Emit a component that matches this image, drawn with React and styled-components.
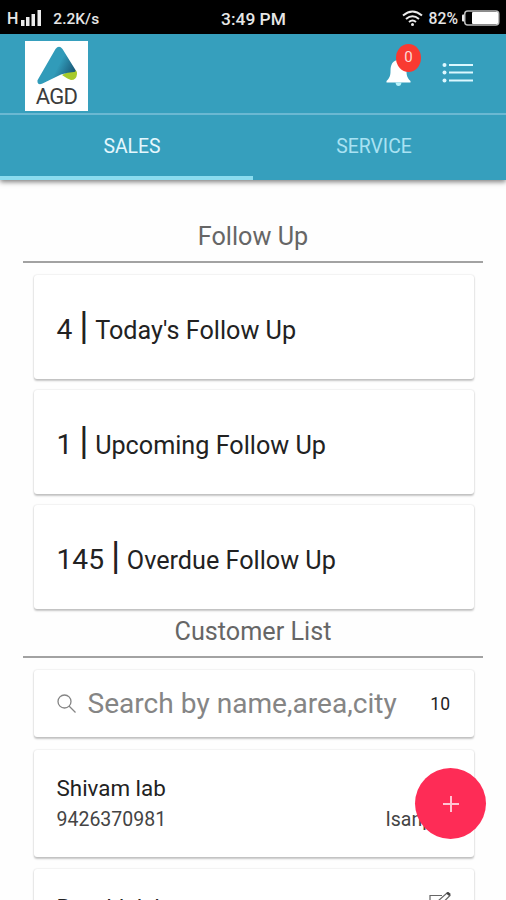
import styled, { createGlobalStyle } from "styled-components"

const GlobalStyle = createGlobalStyle`
    * {
        box-sizing: border-box;
    }

    body {
        margin: 0;
        background-color: #fefefe;
        font-family: Roboto, "Liberation Sans", sans-serif;
        color: #222;
    }
`

const Screen = styled.div`
    position: relative;
    width: 506px;
    height: 900px;
    overflow: hidden;
    display: flex;
    flex-direction: column;
`

const StatusBar = styled.div`
    flex: none;
    height: 34px;
    padding: 0 6px 0 7px;
    display: grid;
    grid-template-columns: 1fr auto 1fr;
    align-items: center;
    background-color: #000;
    color: #e6e6e6;
`

const StatusGroup = styled.div`
    display: flex;
    align-items: center;
    justify-content: ${({ $end }) => ($end ? "flex-end" : "flex-start")};
`

const StatusText = styled.span`
    font-size: ${({ $size }) => $size}px;
    font-weight: 500;
    line-height: 34px;
    padding-top: 2px;
    white-space: nowrap;
`

const Signal = styled.svg`
    margin: 0 11px 0 2px;
`

const Wifi = styled.svg`
    margin-right: 6px;
`

const Battery = styled.svg`
    margin-left: 4px;
`

const Header = styled.header`
    flex: none;
    height: 146px;
    background-color: #369fbd;
    box-shadow: 0 2px 5px rgba(0, 0, 0, 0.5);
`

const NavBar = styled.div`
    height: 81px;
    padding: 7px 33px 0 25px;
    display: flex;
    justify-content: space-between;
    border-bottom: 2px solid #6bb8d2;
`

const Logo = styled.div`
    width: 63px;
    height: 70px;
    display: flex;
    flex-direction: column;
    align-items: center;
    background-color: #fff;
`

const LogoName = styled.span`
    font-size: 22px;
    line-height: 24px;
    letter-spacing: -0.8px;
    color: #3c3c3c;
`

const Actions = styled.div`
    display: flex;
    align-items: flex-start;
    padding-top: 17px;
    gap: 31px;
`

const Notifications = styled.div`
    position: relative;
    width: 25px;
    height: 30px;
`

const Badge = styled.span`
    position: absolute;
    left: 10px;
    top: -14px;
    width: 25px;
    height: 28px;
    border-radius: 50%;
    background-color: #f93a31;
    color: #ffdcd8;
    font-size: 15px;
    line-height: 27px;
    text-align: center;
`

const MenuIcon = styled.svg`
    margin-top: 4px;
`

const Tabs = styled.nav`
    display: flex;
    height: 65px;
`

const Tab = styled.div`
    flex: 1;
    padding-left: ${({ $active }) => ($active ? 11 : 0)}px;
    padding-right: ${({ $active }) => ($active ? 0 : 11)}px;
    border-bottom: 4px solid ${({ $active }) => ($active ? "#8bdcef" : "transparent")};
    color: ${({ $active }) => ($active ? "#e4f7fd" : "#a9e2f3")};
    font-size: 19.4px;
    line-height: 64px;
    text-align: center;
`

const Content = styled.main`
    padding: 39px 23px 0;
`

const SectionTitle = styled.h2`
    margin: 0 0 ${({ $gap }) => $gap}px;
    height: 44px;
    border-bottom: 2px solid #a2a2a2;
    color: #666;
    font-size: 25.2px;
    font-weight: 400;
    line-height: 36px;
    text-align: center;
`

const Card = styled.div`
    height: ${({ $height }) => $height}px;
    margin: 0 9.5px ${({ $gap }) => $gap}px 10.5px;
    padding: 0 23px;
    border-radius: 3px;
    background-color: #fff;
    box-shadow: 0 1.5px 2px rgba(0, 0, 0, 0.22), 0 0 2px rgba(0, 0, 0, 0.12);
`

const FollowUpCard = styled(Card)`
    display: flex;
    align-items: baseline;
    line-height: 102px;
`

const Count = styled.span`
    font-size: 28.2px;
`

const Bar = styled.span`
    margin: 0 6.5px 0 7px;
    font-size: 38px;
`

const FollowUpLabel = styled.span`
    font-size: 25.2px;
`

const SearchCard = styled(Card)`
    display: flex;
    align-items: center;
`

const SearchHint = styled.span`
    flex: 1;
    margin-left: 11px;
    font-size: 28.1px;
    color: #858585;
    white-space: nowrap;
`

const ResultCount = styled.span`
    font-size: 17.5px;
    letter-spacing: 0.3px;
`

const CustomerCard = styled(Card)`
    padding-top: 23px;
`

const CustomerRow = styled.div`
    display: flex;
    justify-content: space-between;
    line-height: 31px;
`

const CustomerName = styled.span`
    font-size: 22.4px;
`

const CustomerMeta = styled.span`
    font-size: 19.5px;
    color: #444;
`

const AddButton = styled.button`
    position: absolute;
    left: 415px;
    top: 768px;
    width: 71px;
    height: 71px;
    padding: 0;
    border: none;
    border-radius: 50%;
    display: grid;
    place-items: center;
    background-color: #fe2c56;
`

const followUps = [
    { count: 4, label: "Today's Follow Up" },
    { count: 1, label: "Upcoming Follow Up" },
    { count: 145, label: "Overdue Follow Up" },
]

const LogoMark = () => (
    <svg width="42" height="44" viewBox="0 0 42 44">
        <defs>
            <linearGradient id="mark" x1="0.2" y1="0.3" x2="1" y2="0.7">
                <stop offset="0.45" stopColor="#319bb9" />
                <stop offset="1" stopColor="#17506f" />
            </linearGradient>
        </defs>
        <path d="M26 34l11-6q4.500 1 4 5-.5 6-6 6-3.500-1-9-5z" fill="#a6ca2c" />
        <path d="M19.500 8q3.500-4.500 7 0L39.500 29q.5 2-1.500 2-6 0-13 2.500L6 42.800q-5 1.500-4.500-3.500z" fill="url(#mark)" />
    </svg>
)

const TopHeader = () => (
    <Header>
        <NavBar>
            <Logo>
                <LogoMark />
                <LogoName>AGD</LogoName>
            </Logo>
            <Actions>
                <Notifications>
                    <svg width="25" height="30" viewBox="0 0 25 30">
                        <path d="M12.500 2c6 0 8 5 8 11 0 5 1 7 4 10v1.500H.5V23c3-3 4-5 4-10 0-6 2-11 8-11z" fill="#fff" />
                        <path d="M9.500 24.500h6q-.5 3.500-3 3.500t-3-3.500z" fill="#b9f3fb" />
                    </svg>
                    <Badge>0</Badge>
                </Notifications>
                <MenuIcon width="31" height="22" viewBox="0 0 31 22">
                    {[3, 10.5, 18.5].map((y) => (
                        <g key={y} fill="#dcf8ff">
                            <circle cx="2.500" cy={y} r="2" />
                            <rect x="7" y={y - 1} width="24" height="2" />
                        </g>
                    ))}
                </MenuIcon>
            </Actions>
        </NavBar>
        <Tabs>
            <Tab $active>SALES</Tab>
            <Tab>SERVICE</Tab>
        </Tabs>
    </Header>
)

const App = () => {
    return (
        <Screen>
            <GlobalStyle />
            <StatusBar>
                <StatusGroup>
                    <StatusText $size={16}>H</StatusText>
                    <Signal width="22" height="17" viewBox="0 0 22 17" fill="#ececec">
                        <rect x="1" y="10" width="3.500" height="6" />
                        <rect x="6" y="7" width="3.500" height="9" />
                        <rect x="11.500" y="4" width="3.500" height="12" />
                        <rect x="17.500" y="0" width="3.500" height="16" />
                    </Signal>
                    <StatusText $size={15.5}>2.2K/s</StatusText>
                </StatusGroup>
                <StatusText $size={17.4}>3:49 PM</StatusText>
                <StatusGroup $end>
                    <Wifi width="21" height="16" viewBox="0 0 21 16" fill="none" stroke="#ececec" strokeWidth="2">
                        <path d="M1 5.500q9.500-8 19 0M4 9q6.500-5.500 13 0M7 12q3.500-3 7 0" />
                        <circle cx="10.500" cy="14.500" r="1.500" fill="#ececec" stroke="none" />
                    </Wifi>
                    <StatusText $size={15.7}>82%</StatusText>
                    <Battery width="38" height="16" viewBox="0 0 38 16">
                        <rect x="0" y="4.500" width="3" height="7" rx="1" fill="#ececec" />
                        <rect x="2.750" y="1" width="34" height="14" rx="3" fill="none" stroke="#bbb" strokeWidth="1.500" />
                        <rect x="10" y="2" width="26" height="12" rx="1" fill="#fff" />
                    </Battery>
                </StatusGroup>
            </StatusBar>
            <TopHeader />
            <Content>
                <SectionTitle $gap={12}>Follow Up</SectionTitle>
                {followUps.map(({ count, label }, i) => (
                    <FollowUpCard key={label} $height={104} $gap={i === followUps.length - 1 ? 5 : 11}>
                        <Count>{count}</Count>
                        <Bar>|</Bar>
                        <FollowUpLabel>{label}</FollowUpLabel>
                    </FollowUpCard>
                ))}
                <SectionTitle $gap={12}>Customer List</SectionTitle>
                <SearchCard $height={67} $gap={13}>
                    <svg width="20" height="20" viewBox="0 0 20 20" fill="none" stroke="#858585" strokeWidth="1.300">
                        <circle cx="7.500" cy="7.500" r="6.500" />
                        <path d="M12 12l6.500 6.500" />
                    </svg>
                    <SearchHint>Search by name,area,city</SearchHint>
                    <ResultCount>10</ResultCount>
                </SearchCard>
                <CustomerCard $height={107} $gap={12}>
                    <CustomerRow>
                        <CustomerName>Shivam lab</CustomerName>
                    </CustomerRow>
                    <CustomerRow>
                        <CustomerMeta>9426370981</CustomerMeta>
                        <CustomerMeta>Isanpur</CustomerMeta>
                    </CustomerRow>
                </CustomerCard>
                <CustomerCard $height={107} $gap={12}>
                    <CustomerRow>
                        <CustomerName>Rusabh laborat</CustomerName>
                        <svg width="22" height="22" viewBox="0 0 22 22" fill="none" stroke="#666" strokeWidth="1.200">
                            <path d="M13 3.500H1v17h16V10" />
                            <path d="M8 13l1-4 9-8 3 2.500-9 9z" />
                            <path d="M18 .5l3 2.500" stroke="#444" strokeWidth="2.500" />
                        </svg>
                    </CustomerRow>
                </CustomerCard>
            </Content>
            <AddButton aria-label="Add">
                <svg width="18" height="18" viewBox="0 0 18 18" stroke="#ffc4d2" strokeWidth="2">
                    <path d="M9 1v16M1 9h16" />
                </svg>
            </AddButton>
        </Screen>
    )
}

export default App
